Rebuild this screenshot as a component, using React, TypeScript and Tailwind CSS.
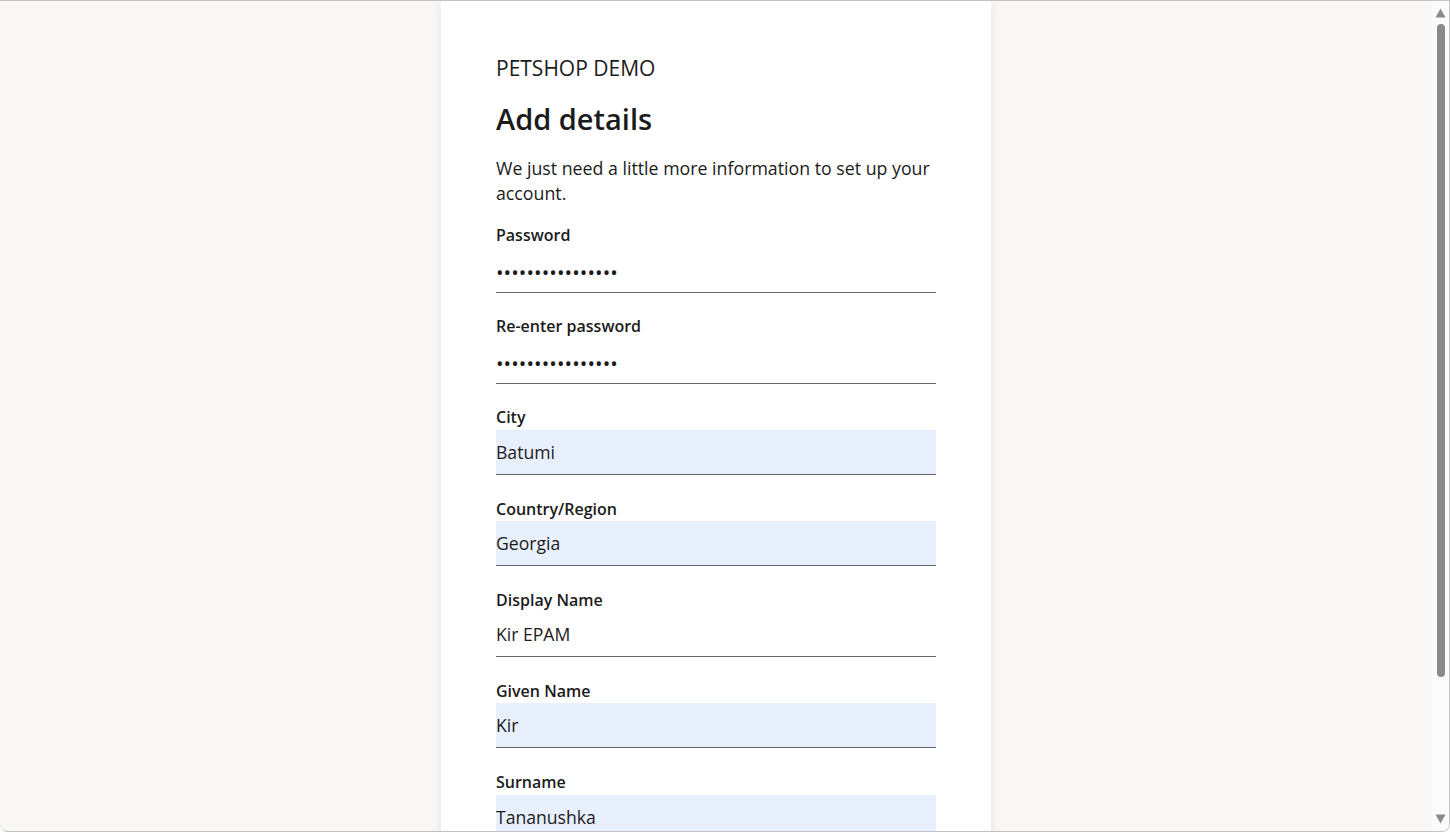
import { useState } from 'react';

type Field = {
  label: string;
  value: string;
  type?: string;
  autofill?: boolean;
};

const FIELDS: Field[] = [
  { label: "Password", value: "passwordpassword", type: "password" },
  { label: "Re-enter password", value: "passwordpassword", type: "password" },
  { label: "City", value: "Batumi", autofill: true },
  { label: "Country/Region", value: "Georgia", autofill: true },
  { label: "Display Name", value: "Kir EPAM" },
  { label: "Given Name", value: "Kir", autofill: true },
  { label: "Surname", value: "Tananushka", autofill: true },
];

function FormField({ field }: { field: Field }) {
  const [value, setValue] = useState(field.value);
  const isPassword = field.type === "password";
  return (
    <div className="flex flex-col">
      <label className="h-[22px] text-[16px] leading-[22px] font-semibold text-[#1b1b1b]">{field.label}</label>
      <input
        type={field.type ?? "text"}
        value={value}
        onChange={(e) => setValue(e.target.value)}
        className={`mt-[1.5px] h-[45px] w-full border-b border-[#666666] px-0 text-[#1b1b1b] outline-none ${
          field.autofill ? "bg-[#e8f0fe]" : "bg-white"
        } ${isPassword ? "pt-[5px] text-[20px] tracking-[0.1px]" : "text-[17.6px]"}`}
      />
    </div>
  );
}

export default function App() {
  return (
    <div
      className="flex h-[832px] w-full overflow-hidden rounded-b-[8px] border-y border-r border-[#c2c2c2] bg-[#f9f8f6]"
      style={{ fontFamily: '"Open Sans", "Noto Sans", sans-serif' }}
    >
      <main className="flex flex-1 justify-center overflow-hidden">
        <div className="h-[900px] w-[550px] shrink-0 bg-white px-[55px] pt-[53px] shadow-[0_0_12px_rgba(0,0,0,0.08)]">
          <p className="text-[21px] leading-[28px] text-[#1b1b1b]">PETSHOP DEMO</p>
          <h1 className="mt-[17px] text-[29px] leading-[40px] font-semibold text-[#1b1b1b]">Add details</h1>
          <p className="mt-[17px] text-[17.75px] leading-[25px] text-[#1b1b1b]">
            We just need a little more information to set up your account.
          </p>
          <div className="mt-[18px] flex flex-col gap-[22.7px]">
            {FIELDS.map((f) => (
              <FormField key={f.label} field={f} />
            ))}
          </div>
        </div>
      </main>

      {/* fake scrollbar */}
      <div className="flex w-[17px] shrink-0 flex-col items-center bg-[#fbfbfb] py-[7px]">
        <svg width="11" height="10" viewBox="0 0 11 10">
          <path d="M5.5 0.5 L10.5 9.5 L0.5 9.5 Z" fill="#8a8a8a" />
        </svg>
        <div className="mt-[6px] h-[653px] w-[8px] rounded-full bg-[#8a8a8a]" />
        <div className="flex-1" />
        <svg width="11" height="10" viewBox="0 0 11 10">
          <path d="M5.5 9.5 L10.5 0.5 L0.5 0.5 Z" fill="#8a8a8a" />
        </svg>
      </div>
    </div>
  );
}
